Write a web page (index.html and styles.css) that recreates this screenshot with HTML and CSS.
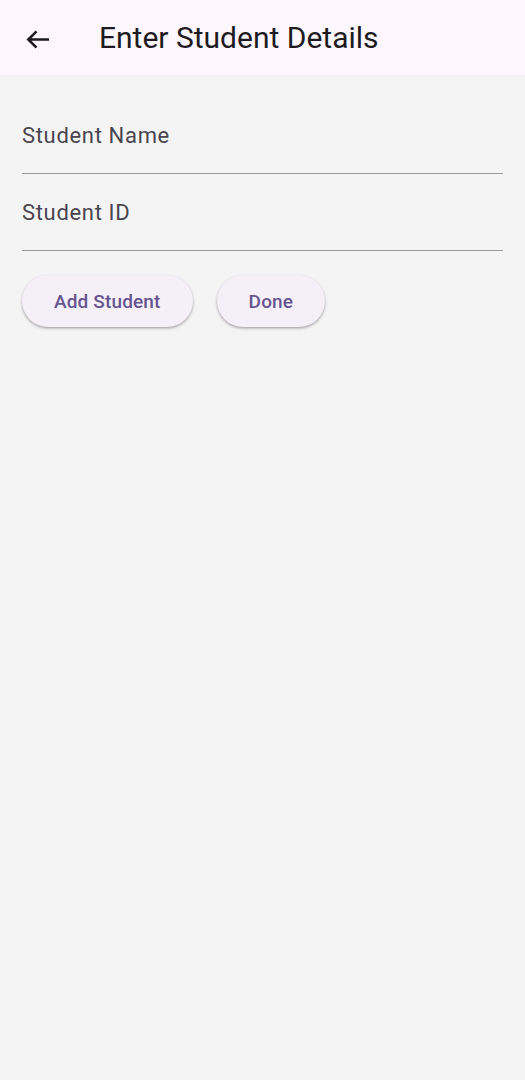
FILE: index.html
```html
<!DOCTYPE html>
<html lang="en">
<head>
<meta charset="utf-8">
<title>Enter Student Details</title>
<link rel="stylesheet" href="styles.css">
</head>
<body>
<header class="appbar">
  <button class="back" aria-label="Back">
    <svg viewBox="0 0 24 19" width="24" height="19"><path d="M23 9.5H2.5M10.5 1.3L2.3 9.5l8.2 8.2" fill="none" stroke="#1d1b20" stroke-width="2.6"/></svg>
  </button>
  <h1 class="title">Enter Student Details</h1>
</header>
<main class="content">
  <div class="field"><span class="label">Student Name</span></div>
  <div class="field"><span class="label">Student ID</span></div>
  <div class="actions">
    <button class="btn">Add Student</button>
    <button class="btn">Done</button>
  </div>
</main>
</body>
</html>
```
FILE: styles.css
```css
html, body {
  margin: 0;
  padding: 0;
  height: 100%;
}
body {
  background: #f4f4f4;
  font-family: Roboto, "Noto Sans", sans-serif;
}
.appbar {
  height: 75px;
  background: #fdf7fd;
  display: flex;
  align-items: center;
  box-sizing: border-box;
}
.back {
  width: 24px;
  height: 19px;
  margin-left: 26px;
  margin-right: 49px;
  margin-top: 3px;
  padding: 0;
  border: none;
  background: none;
  display: flex;
  align-items: center;
  justify-content: center;
}
.back svg { display: block; }
.title {
  margin: 0;
  font-size: 30px;
  font-weight: 400;
  color: #1d1b20;
  line-height: 36px;
  letter-spacing: 0;
}
.content {
  padding: 22px 22px 0 22px;
}
.field {
  padding-top: 26px;
  padding-bottom: 24px;
  border-bottom: 1.5px solid #9a9a9a;
}
.label {
  display: block;
  font-size: 22px;
  line-height: 26px;
  color: #49454f;
  letter-spacing: 0.67px;
}
.actions {
  display: flex;
  gap: 24px;
  margin-top: 24px;
}
.btn {
  height: 52px;
  padding: 0 32px;
  border: none;
  border-radius: 26px;
  background: #f5eff8;
  color: #65558f;
  font-family: Roboto, "Noto Sans", sans-serif;
  font-size: 19px;
  font-weight: 500;
  letter-spacing: 0.15px;
  box-shadow: 0 1.5px 3px rgba(0,0,0,0.25), 0 1px 2px rgba(0,0,0,0.1);
}
```
